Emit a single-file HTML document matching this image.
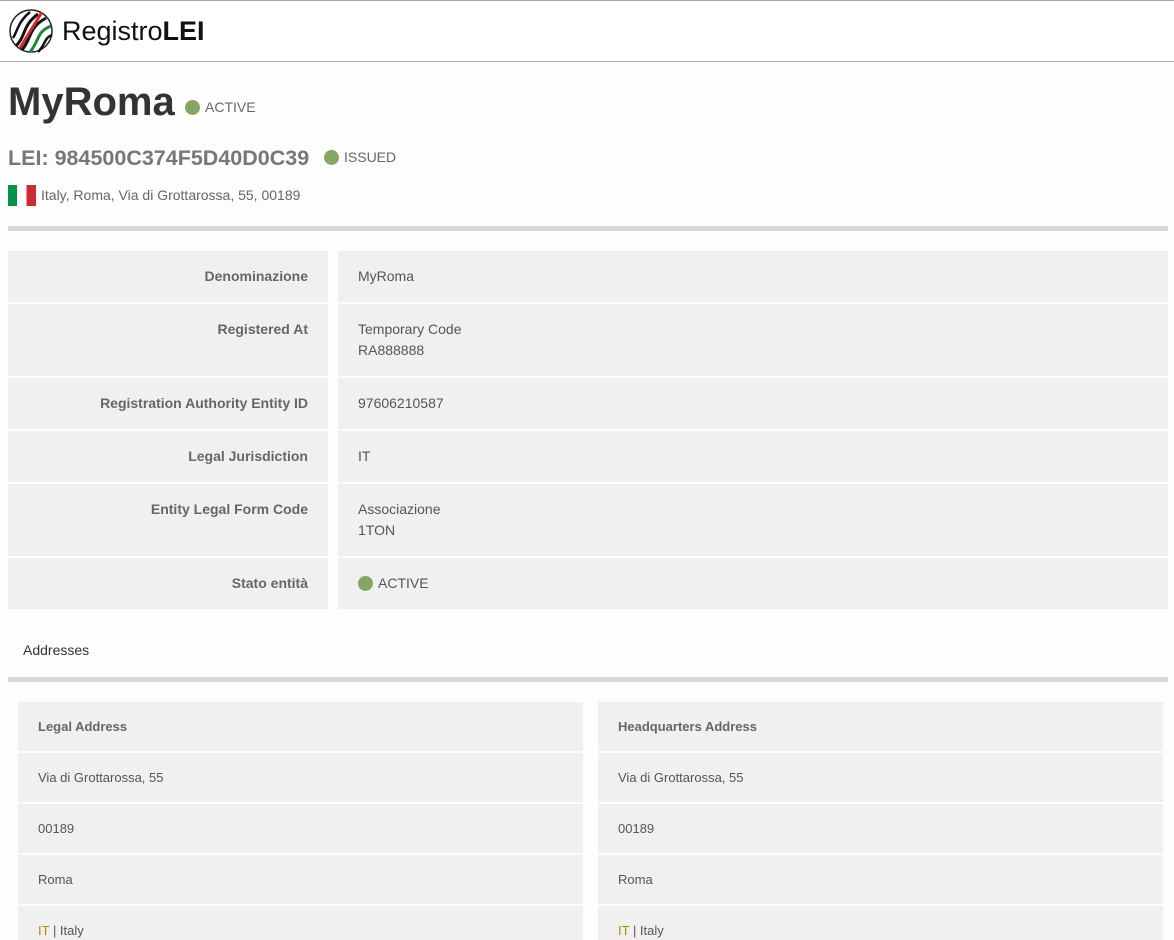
<!DOCTYPE html>
<html><head><meta charset="utf-8"><style>
*{box-sizing:border-box;margin:0;padding:0}
html{width:1174px;height:940px;overflow:hidden}
body{width:1174px;height:940px;overflow:hidden;background:#fdfdfd;font-family:"Liberation Sans",sans-serif;color:#555;position:relative}
.hdr{position:absolute;left:0;top:0;width:1174px;height:62px;background:#fff;border-top:1px solid #aaa;border-bottom:1px solid #aaa}
.abs{position:absolute}
.dot{display:inline-block;border-radius:50%;background:#86a664}
.row{position:absolute;background:#f0f0f0}
.lab{font-weight:bold;font-size:14px;color:#666;text-align:right;padding-right:20px}
.val{font-size:14px;color:#555;padding-left:20px}
.ad{font-size:13px;color:#555;padding-left:20px;padding-top:17px}
</style></head><body>
<div class="hdr">
<svg class="abs" style="left:8px;top:7px" width="46" height="46" viewBox="0 0 46 46">
<circle cx="23" cy="23" r="21" fill="#fff" stroke="#222" stroke-width="1.5"/>
<path d="M8 38 C18 28 14 18 30 6" stroke="#111" stroke-width="3" fill="none"/>
<path d="M14 42 C24 30 20 20 38 10" stroke="#111" stroke-width="3" fill="none"/>
<path d="M22 44 C32 32 28 24 43 18" stroke="#1a8a3a" stroke-width="3" fill="none"/>
<path d="M30 44 C38 36 36 30 44 27" stroke="#111" stroke-width="2.5" fill="none"/>
<path d="M5 30 C10 22 10 14 22 4" stroke="#111" stroke-width="2.5" fill="none"/>
<path d="M12 40 L34 4" stroke="#d42a2a" stroke-width="3"/>
</svg>
<div class="abs" style="left:62px;top:15px;font-size:27px;color:#111">Registro<b>LEI</b></div>
</div>
<div class="abs" style="left:8px;top:80px;font-size:40px;font-weight:bold;color:#333">MyRoma</div>
<div class="abs" style="left:185px;top:99px;font-size:14px;color:#666"><span class="dot" style="width:15px;height:15px;vertical-align:-3px;margin-right:5px"></span>ACTIVE</div>
<div class="abs" style="left:8px;top:146px;font-size:21.5px;font-weight:bold;color:#777">LEI: 984500C374F5D40D0C39</div>
<div class="abs" style="left:324px;top:149px;font-size:14px;color:#666"><span class="dot" style="width:15px;height:15px;vertical-align:-3px;margin-right:5px"></span>ISSUED</div>
<div class="abs" style="left:8px;top:185px;width:28px;height:21px;background:linear-gradient(90deg,#009246 0 33%,#fff 33% 66%,#ce2b37 66%)"></div>
<div class="abs" style="left:41px;top:187px;font-size:14px;color:#666">Italy, Roma, Via di Grottarossa, 55, 00189</div>
<div class="abs" style="left:8px;top:226px;width:1160px;height:5px;background:#d8d8d8"></div>

<div class="row lab" style="left:8px;top:251px;width:320px;height:51px;padding-top:17px">Denominazione</div>
<div class="row val" style="left:338px;top:251px;width:830px;height:51px;padding-top:17px">MyRoma</div>
<div class="row lab" style="left:8px;top:304px;width:320px;height:72px;padding-top:17px">Registered At</div>
<div class="row val" style="left:338px;top:304px;width:830px;height:72px;padding-top:15px;line-height:21px">Temporary Code<br>RA888888</div>
<div class="row lab" style="left:8px;top:378px;width:320px;height:51px;padding-top:17px">Registration Authority Entity ID</div>
<div class="row val" style="left:338px;top:378px;width:830px;height:51px;padding-top:17px">97606210587</div>
<div class="row lab" style="left:8px;top:431px;width:320px;height:51px;padding-top:17px">Legal Jurisdiction</div>
<div class="row val" style="left:338px;top:431px;width:830px;height:51px;padding-top:17px">IT</div>
<div class="row lab" style="left:8px;top:484px;width:320px;height:72px;padding-top:17px">Entity Legal Form Code</div>
<div class="row val" style="left:338px;top:484px;width:830px;height:72px;padding-top:15px;line-height:21px">Associazione<br>1TON</div>
<div class="row lab" style="left:8px;top:558px;width:320px;height:51px;padding-top:17px">Stato entità</div>
<div class="row val" style="left:338px;top:558px;width:830px;height:51px;padding-top:17px"><span class="dot" style="width:15px;height:15px;vertical-align:-3px;margin-right:5px"></span>ACTIVE</div>

<div class="abs" style="left:23px;top:642px;font-size:14px;color:#333">Addresses</div>
<div class="abs" style="left:8px;top:677px;width:1160px;height:5px;background:#d8d8d8"></div>

<div class="row ad" style="left:18px;top:702px;width:565px;height:49px;font-weight:bold;color:#666">Legal Address</div>
<div class="row ad" style="left:18px;top:753px;width:565px;height:49px">Via di Grottarossa, 55</div>
<div class="row ad" style="left:18px;top:804px;width:565px;height:49px">00189</div>
<div class="row ad" style="left:18px;top:855px;width:565px;height:49px">Roma</div>
<div class="row ad" style="left:18px;top:906px;width:565px;height:34px"><span style="color:#b8860b">IT</span> | Italy</div>
<div class="row ad" style="left:598px;top:702px;width:565px;height:49px;font-weight:bold;color:#666">Headquarters Address</div>
<div class="row ad" style="left:598px;top:753px;width:565px;height:49px">Via di Grottarossa, 55</div>
<div class="row ad" style="left:598px;top:804px;width:565px;height:49px">00189</div>
<div class="row ad" style="left:598px;top:855px;width:565px;height:49px">Roma</div>
<div class="row ad" style="left:598px;top:906px;width:565px;height:34px"><span style="color:#b8860b">IT</span> | Italy</div>
</body></html>
